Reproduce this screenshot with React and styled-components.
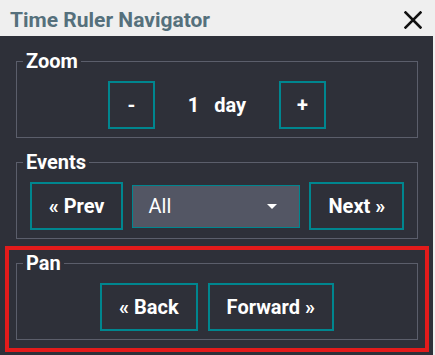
import { useState } from "react";
import styled, { createGlobalStyle } from "styled-components";

const GlobalStyle = createGlobalStyle`
  html, body {
    margin: 0;
    padding: 0;
    background: #efefef;
  }
  body {
    font-family: Roboto, "Liberation Sans", Arial, sans-serif;
  }
`;

const Window = styled.div`
  width: 433px;
  min-height: 355px;
  background: #2e3039;
  display: flex;
  flex-direction: column;
`;

const TitleBar = styled.div`
  height: 36px;
  box-sizing: border-box;
  padding: 3px 10px 0 10px;
  background: #efefef;
  display: flex;
  align-items: center;
  justify-content: space-between;
`;

const Title = styled.div`
  font-size: 21px;
  font-weight: 700;
  color: #55707c;
`;

const CloseButton = styled.button`
  border: none;
  background: none;
  padding: 0;
  width: 20px;
  height: 20px;
  display: flex;
  align-items: center;
  justify-content: center;
  cursor: pointer;
`;

const Content = styled.div`
  display: flex;
  flex-direction: column;
  gap: 13px;
  padding: 14px 15px 0 16px;
`;

const Highlight = styled.div`
  margin: -6px -11px 0 -11px;
  padding: 2px 7px 8px 7px;
  border: 4px solid #e31b1b;
`;

const Group = styled.fieldset`
  margin: 0;
  padding: 9px 6px 8px 6px;
  border: 1px solid #5b5e6b;
  min-width: 0;
`;

const Legend = styled.legend`
  padding: 0 3px;
  font-size: 20px;
  line-height: 22px;
  font-weight: 700;
  color: #ffffff;
`;

const Row = styled.div`
  display: flex;
  justify-content: center;
  align-items: center;
  gap: ${p => p.gap ?? 9}px;
`;

const Button = styled.button`
  box-sizing: border-box;
  height: 48px;
  min-width: ${p => p.square ? "47px" : "0"};
  padding: 0 ${p => p.square ? 0 : 17}px;
  border: 2px solid #00868f;
  background: transparent;
  color: #ffffff;
  font-family: inherit;
  font-size: 20px;
  font-weight: 700;
  cursor: pointer;

  &:hover {
    background: rgba(0, 134, 143, 0.15);
  }
`;

const Value = styled.div`
  width: 124px;
  display: flex;
  justify-content: center;
  gap: 15px;
  color: #ffffff;
  font-size: 20px;
  font-weight: 700;
`;

const Select = styled.div`
  box-sizing: border-box;
  width: 168px;
  height: 43px;
  padding: 0 22px 0 15px;
  background: #535664;
  border: 1px solid #00868f;
  display: flex;
  align-items: center;
  justify-content: space-between;
  color: #ffffff;
  font-size: 20px;
  cursor: pointer;
`;

const Caret = styled.span`
  width: 0;
  height: 0;
  border-left: 5px solid transparent;
  border-right: 5px solid transparent;
  border-top: 5px solid #ffffff;
`;

export default function App() {
  const [days, setDays] = useState(1);
  const [filter] = useState("All");

  return (
    <>
      <GlobalStyle />
      <Window>
        <TitleBar>
          <Title>Time Ruler Navigator</Title>
          <CloseButton aria-label="Close">
            <svg width="18" height="18" viewBox="0 0 18 18">
              <path d="M1.5 1.5 L16.5 16.5 M16.5 1.5 L1.5 16.5" stroke="#111" strokeWidth="2.6" strokeLinecap="square" />
            </svg>
          </CloseButton>
        </TitleBar>
        <Content>
          <Group>
            <Legend>Zoom</Legend>
            <Row gap={0}>
              <Button square onClick={() => setDays(Math.max(1, days - 1))}>-</Button>
              <Value>
                <span>{days}</span>
                <span>{days === 1 ? "day" : "days"}</span>
              </Value>
              <Button square onClick={() => setDays(days + 1)}>+</Button>
            </Row>
          </Group>
          <Group>
            <Legend>Events</Legend>
            <Row>
              <Button>« Prev</Button>
              <Select>
                <span>{filter}</span>
                <Caret />
              </Select>
              <Button>Next »</Button>
            </Row>
          </Group>
          <Highlight>
            <Group>
              <Legend>Pan</Legend>
              <Row gap={10}>
                <Button>« Back</Button>
                <Button>Forward »</Button>
              </Row>
            </Group>
          </Highlight>
        </Content>
      </Window>
    </>
  );
}
